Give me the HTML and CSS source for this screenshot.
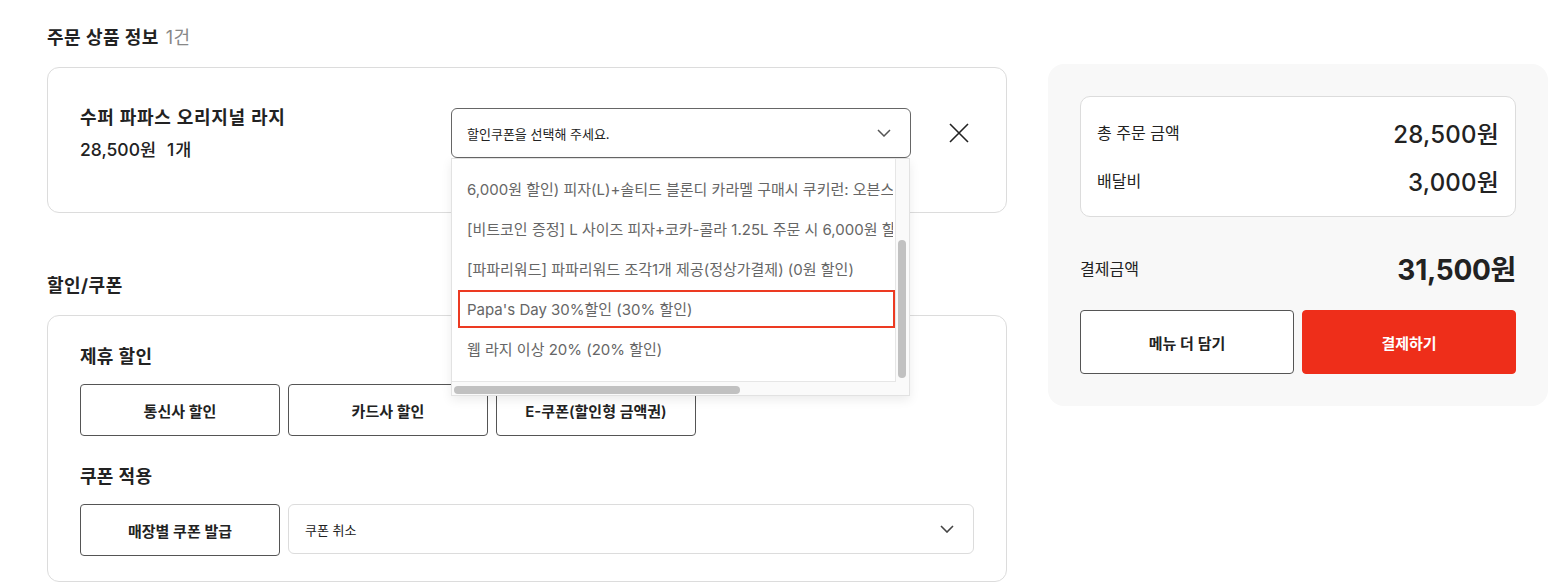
FILE: index.html
```html
<!DOCTYPE html>
<html lang="ko">
<head>
<meta charset="utf-8">
<title>주문 상품 정보</title>
<link rel="stylesheet" href="styles.css">
</head>
<body>
<div class="page">
  <div class="main-col">
    <h2 class="sec-title">주문 상품 정보 <span class="count">1건</span></h2>
    <div class="card product-card">
      <div class="product-info">
        <div class="product-name">수퍼 파파스 오리지널 라지</div>
        <div class="product-price"><span>28,500원</span><span class="qty">1개</span></div>
      </div>
      <div class="select-wrap">
        <div class="select select-dark">
          <span>할인쿠폰을 선택해 주세요.</span>
          <svg class="chev" width="14" height="8" viewBox="0 0 14 8"><path d="M1 1l6 6 6-6" fill="none" stroke="#555" stroke-width="1.5"/></svg>
        </div>
        <div class="dropdown">
          <div class="dd-content">
            <ul class="dd-list">
              <li class="dd-item">6,000원 할인) 피자(L)+솔티드 블론디 카라멜 구매시 쿠키런: 오븐스매시 콜라보 쿠폰 (6,000원 할인)</li>
              <li class="dd-item">[비트코인 증정] L 사이즈 피자+코카-콜라 1.25L 주문 시 6,000원 할인 (6,000원 할인)</li>
              <li class="dd-item">[파파리워드] 파파리워드 조각1개 제공(정상가결제) (0원 할인)</li>
              <li class="dd-item active">Papa's Day 30%할인 (30% 할인)</li>
              <li class="dd-item">웹 라지 이상 20% (20% 할인)</li>
            </ul>
          </div>
          <div class="dd-vtrack"><div class="dd-vthumb"></div></div>
          <div class="dd-htrack"><div class="dd-hthumb"></div></div>
          <div class="dd-corner"></div>
        </div>
      </div>
      <button class="close-btn" aria-label="삭제">
        <svg width="24" height="24" viewBox="0 0 24 24"><path d="M3 3l18 18M21 3L3 21" fill="none" stroke="#222" stroke-width="1.6"/></svg>
      </button>
    </div>

    <h2 class="sec-title sec-title-2">할인/쿠폰</h2>
    <div class="card coupon-card">
      <h3 class="sub-title">제휴 할인</h3>
      <div class="btn-row">
        <button class="opt-btn">통신사 할인</button>
        <button class="opt-btn">카드사 할인</button>
        <button class="opt-btn">E-쿠폰(할인형 금액권)</button>
      </div>
      <h3 class="sub-title sub-title-2">쿠폰 적용</h3>
      <div class="btn-row">
        <button class="opt-btn">매장별 쿠폰 발급</button>
        <div class="select select-light">
          <span>쿠폰 취소</span>
          <svg class="chev" width="14" height="8" viewBox="0 0 14 8"><path d="M1 1l6 6 6-6" fill="none" stroke="#444" stroke-width="1.6"/></svg>
        </div>
      </div>
    </div>
  </div>

  <aside class="summary">
    <div class="summary-card">
      <div class="sum-row"><span class="sum-label">총 주문 금액</span><span class="sum-value">28,500원</span></div>
      <div class="sum-row"><span class="sum-label">배달비</span><span class="sum-value">3,000원</span></div>
    </div>
    <div class="total-row"><span class="total-label">결제금액</span><span class="total-value">31,500원</span></div>
    <div class="action-row">
      <button class="act-btn act-outline">메뉴 더 담기</button>
      <button class="act-btn act-primary">결제하기</button>
    </div>
  </aside>
</div>
</body>
</html>
```

FILE: styles.css
```css
* { box-sizing: border-box; }
html, body { margin: 0; padding: 0; background: #fff; }
body {
  font-family: Inter, "Noto Sans CJK KR", sans-serif;
  color: #222;
  overflow: hidden;
}
button { font-family: inherit; cursor: pointer; }

.page {
  display: flex;
  align-items: flex-start;
  gap: 41px;
  padding-left: 47px;
}

.main-col { width: 960px; padding-top: 25px; }

.sec-title {
  margin: 0;
  font-size: 18px;
  line-height: 26px;
  font-weight: 700;
  color: #222;
  letter-spacing: 0.5px;
}
.sec-title .count { font-weight: 400; color: #888; margin-left: 2px; }
.sec-title-2 { margin-top: 60px; }

.card {
  border: 1px solid #dcdcdc;
  border-radius: 12px;
  background: #fff;
}

.product-card {
  margin-top: 16px;
  height: 146px;
  display: flex;
  align-items: flex-start;
  padding: 40px 35px 0 32px;
}
.product-info { flex: 1; margin-top: -3px; }
.product-name { font-size: 18px; line-height: 26px; font-weight: 600; letter-spacing: 0.7px; }
.product-price { margin-top: 6px; font-size: 17.5px; line-height: 26px; font-weight: 500; }
.product-price .qty { margin-left: 11px; letter-spacing: 1px; }

.select-wrap { position: relative; width: 460px; }
.select {
  display: flex;
  align-items: center;
  justify-content: space-between;
  height: 50px;
  font-size: 13px;
  color: #222;
  background: #fff;
}
.select-dark {
  border: 1px solid #666;
  border-radius: 6px;
  padding: 0 19px 0 15px;
}
.chev { display: block; }

.close-btn {
  margin-left: 36px;
  margin-top: 13px;
  width: 24px;
  height: 24px;
  padding: 0;
  border: 0;
  background: none;
}
.close-btn svg { display: block; }

/* dropdown overlay */
.dropdown {
  position: absolute;
  top: 100%;
  left: 0;
  width: 459px;
  height: 238px;
  border: 1px solid #e2e2e2;
  background: #fff;
  box-shadow: 0 4px 10px rgba(0, 0, 0, 0.08);
  display: grid;
  grid-template-columns: 444px 13px;
  grid-template-rows: 223px 13px;
  z-index: 10;
}
.dd-content {
  overflow: hidden;
  border-right: 1px solid #e6e6e6;
  border-bottom: 1px solid #e6e6e6;
}
.dd-list {
  list-style: none;
  margin: 0;
  padding: 10px 0 0;
  display: flex;
  flex-direction: column;
}
.dd-item {
  flex: none;
  height: 38px;
  margin: 1px 0 1px 6px;
  border: 2px solid transparent;
  padding-left: 7px;
  font-size: 15px;
  line-height: 36px;
  color: #666;
  white-space: nowrap;
  overflow: hidden;
}
.dd-item.active { border-color: #ec3a22; }
.dd-vtrack { background: #fafafa; padding: 81px 2px 0 2px; }
.dd-vthumb { width: 8px; height: 138px; border-radius: 4px; background: #c1c1c1; }
.dd-htrack { background: #fafafa; padding: 4px 0 0 2px; }
.dd-hthumb { width: 286px; height: 8px; border-radius: 4px; background: #c1c1c1; }
.dd-corner { background: #fafafa; }

/* coupon card */
.coupon-card {
  margin-top: 16px;
  padding: 28px 32px 25px;
}
.sub-title {
  margin: 0;
  font-size: 18px;
  line-height: 26px;
  font-weight: 600;
  letter-spacing: 0.3px;
}
.sub-title-2 { margin-top: 28px; }
.btn-row { display: flex; gap: 8px; margin-top: 14px; }
.opt-btn {
  width: 200px;
  height: 52px;
  border: 1px solid #555;
  border-radius: 4px;
  background: #fff;
  font-size: 15px;
  font-weight: 600;
  color: #222;
}
.select-light {
  width: 686px;
  border: 1px solid #dcdcdc;
  border-radius: 6px;
  padding: 0 19px 0 16px;
}

/* summary panel */
.summary {
  margin-top: 64px;
  width: 500px;
  background: #f8f8f8;
  border-radius: 16px;
  padding: 32px;
}
.summary-card {
  background: #fff;
  border: 1px solid #dcdcdc;
  border-radius: 10px;
  padding: 19px 16px 20px;
  display: flex;
  flex-direction: column;
  gap: 16px;
}
.sum-row { display: flex; justify-content: space-between; align-items: center; height: 32px; }
.sum-label { font-size: 16px; color: #222; }
.sum-value { font-size: 24px; font-weight: 500; color: #222; letter-spacing: 0.2px; }
.total-row {
  display: flex;
  justify-content: space-between;
  align-items: center;
  height: 40px;
  margin-top: 31px;
}
.total-label { font-size: 16px; color: #222; }
.total-value { font-size: 28px; font-weight: 700; color: #222; letter-spacing: -0.3px; }
.action-row { display: flex; gap: 8px; margin-top: 22px; }
.act-btn {
  flex: 1;
  height: 64px;
  border-radius: 4px;
  font-size: 15px;
  font-weight: 600;
}
.act-outline { background: #fff; border: 1px solid #555; color: #222; }
.act-primary { background: #ee2e1a; border: 1px solid #ee2e1a; color: #fff; font-weight: 700; }
```
